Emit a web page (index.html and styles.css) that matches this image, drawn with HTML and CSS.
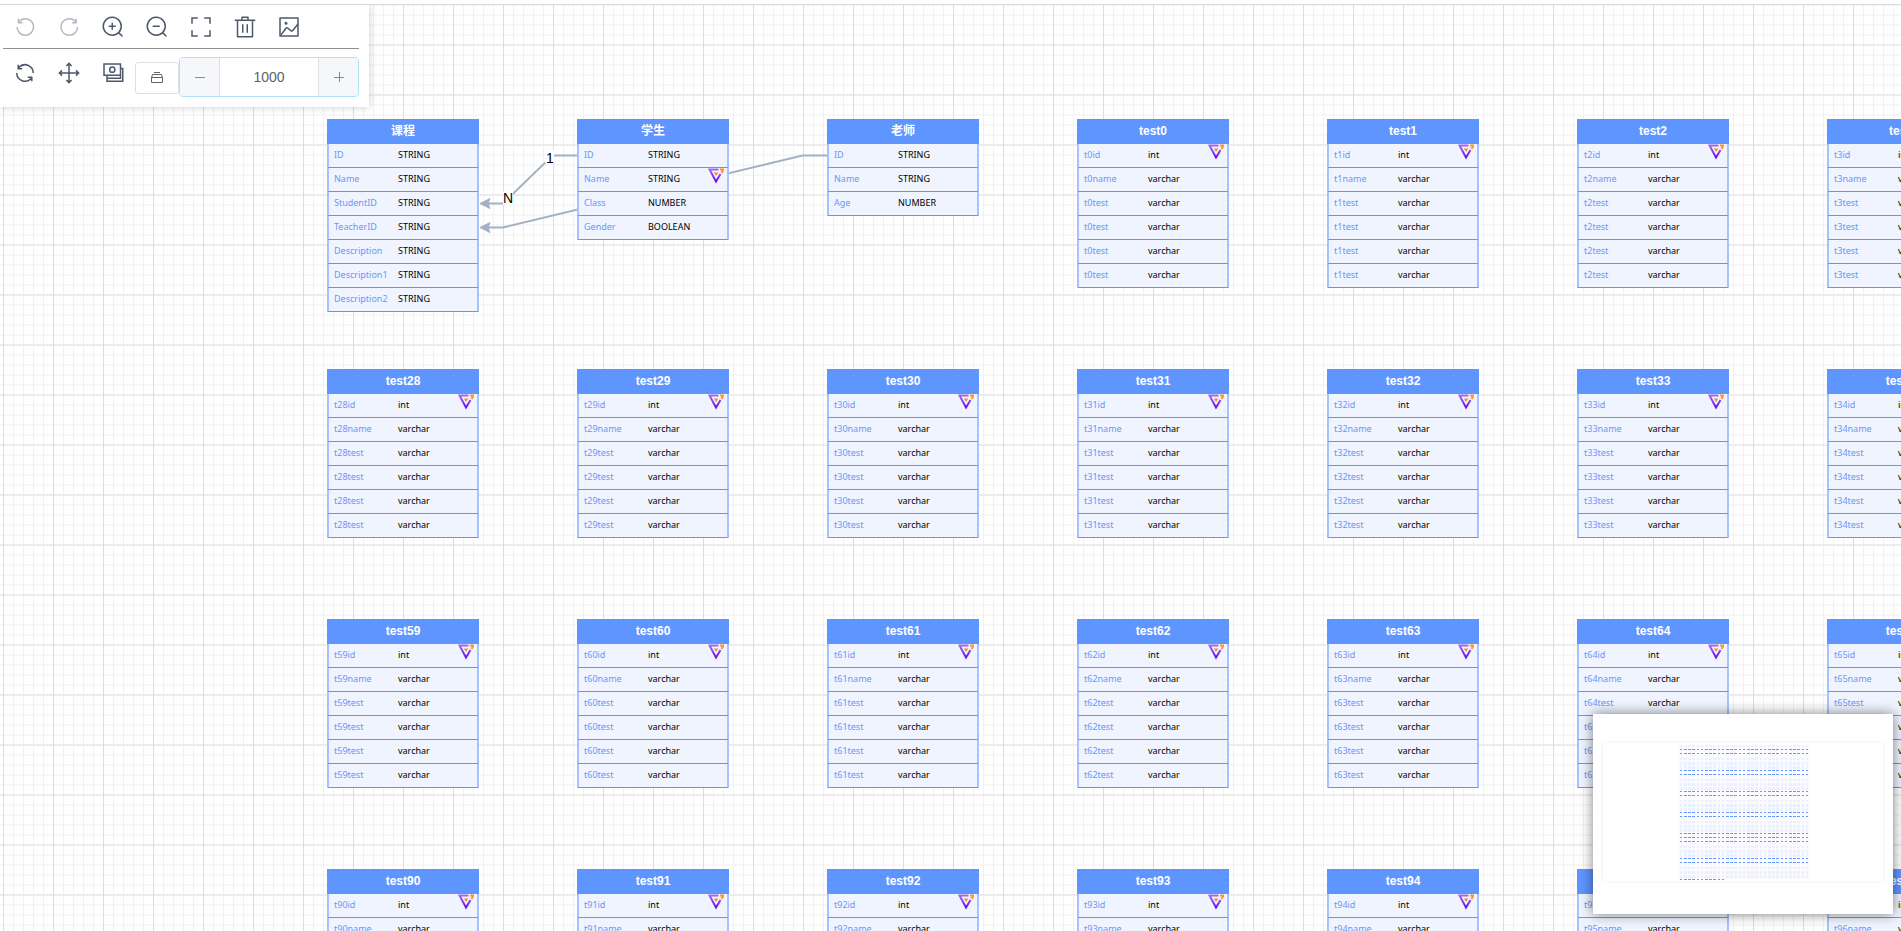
FILE: index.html
```
<!DOCTYPE html>
<html lang="zh-CN">
<head>
<meta charset="utf-8">
<title>ER</title>
<link rel="stylesheet" href="styles.css">
</head>
<body>
<main class="workspace">
  <div class="canvas" id="canvas">
    <svg class="edges" aria-hidden="true">
      <g class="edge-line">
        <path d="M577 155.500H552.500L503 203.500H486"/>
        <path d="M827 155.500H802.500L503 227.500H486"/>
      </g>
      <g class="edge-arrow">
        <path d="M480 203.500l10-5-2 5 2 5z"/>
        <path d="M480 227.500l10-5-2 5 2 5z"/>
      </g>
      <rect class="label-bg" x="545" y="150" width="9" height="13"/>
      <rect class="label-bg" x="503" y="192" width="10" height="13"/>
      <text class="edge-label" x="546" y="163">1</text>
      <text class="edge-label" x="503" y="203">N</text>
    </svg>
  </div>

  <div class="toolbar">
    <div class="tool-row">
      <button class="tool" aria-label="撤销" disabled><svg viewBox="0 0 1024 1024"><path d="M289.088 296.704h92.992a32 32 0 0 1 0 64H232.960a32 32 0 0 1-32-32V179.712a32 32 0 0 1 64 0v50.560a384 384 0 0 1 643.840 282.880 384 384 0 0 1-383.936 384 384 384 0 0 1-384-384h64a320 320 0 1 0 640 0 320 320 0 0 0-555.712-216.448z"/></svg></button>
      <button class="tool" aria-label="重做" disabled><svg viewBox="0 0 1024 1024"><path d="M784.512 230.272v-50.560a32 32 0 1 1 64 0v149.056a32 32 0 0 1-32 32H667.520a32 32 0 1 1 0-64h92.992A320 320 0 1 0 524.800 833.152a320 320 0 0 0 320-320h64a384 384 0 0 1-384 384 384 384 0 0 1-384-384 384 384 0 0 1 643.712-282.880z"/></svg></button>
      <button class="tool" aria-label="放大"><svg viewBox="0 0 1024 1024"><path d="m795.904 750.720 124.992 124.928a32 32 0 0 1-45.248 45.248L750.656 795.904a416 416 0 1 1 45.248-45.248zM480 832a352 352 0 1 0 0-704 352 352 0 0 0 0 704zm-32-384v-96a32 32 0 0 1 64 0v96h96a32 32 0 0 1 0 64h-96v96a32 32 0 0 1-64 0v-96h-96a32 32 0 0 1 0-64h96z"/></svg></button>
      <button class="tool" aria-label="缩小"><svg viewBox="0 0 1024 1024"><path d="m795.904 750.720 124.992 124.928a32 32 0 0 1-45.248 45.248L750.656 795.904a416 416 0 1 1 45.248-45.248zM480 832a352 352 0 1 0 0-704 352 352 0 0 0 0 704zM352 448h256a32 32 0 0 1 0 64H352a32 32 0 0 1 0-64z"/></svg></button>
      <button class="tool" aria-label="全屏"><svg viewBox="0 0 1024 1024"><path d="m160 96.064 192 .192a32 32 0 0 1 0 64l-192-.192V352a32 32 0 0 1-64 0V96h64v.064zm0 831.872V928H96V672a32 32 0 1 1 64 0v191.936l192-.192a32 32 0 1 1 0 64l-192 .192zM864 96.064V96h64v256a32 32 0 1 1-64 0V160.064l-192 .192a32 32 0 1 1 0-64l192-.192zm0 831.872-192-.192a32 32 0 0 1 0-64l192 .192V672a32 32 0 1 1 64 0v256h-64v-.064z"/></svg></button>
      <button class="tool" aria-label="删除"><svg viewBox="0 0 1024 1024"><path d="M160 256H96a32 32 0 0 1 0-64h256V95.936a32 32 0 0 1 32-32h256a32 32 0 0 1 32 32V192h256a32 32 0 1 1 0 64h-64v672a32 32 0 0 1-32 32H192a32 32 0 0 1-32-32V256zm448-64v-64H416v64h192zM224 896h576V256H224v640zm192-128a32 32 0 0 1-32-32V416a32 32 0 0 1 64 0v320a32 32 0 0 1-32 32zm192 0a32 32 0 0 1-32-32V416a32 32 0 0 1 64 0v320a32 32 0 0 1-32 32z"/></svg></button>
      <button class="tool" aria-label="导出图片"><svg viewBox="0 0 1024 1024"><path d="M160 160v704h704V160H160zm-32-64h768a32 32 0 0 1 32 32v768a32 32 0 0 1-32 32H128a32 32 0 0 1-32-32V128a32 32 0 0 1 32-32z"/><path d="M384 288q64 0 64 64t-64 64q-64 0-64-64t64-64zM185.408 876.992l-50.816-38.912L350.720 556.032a96 96 0 0 1 134.592-17.856l1.856 1.472 122.880 99.136a32 32 0 0 0 44.992-4.864l216-269.888 49.920 39.936-215.808 269.824-.256.320a96 96 0 0 1-135.040 14.464l-122.880-99.072-.640-.512a32 32 0 0 0-44.800 5.952L185.408 876.992z"/></svg></button>
    </div>
    <div class="tool-row tool-row-second">
      <button class="tool" aria-label="刷新"><svg viewBox="0 0 1024 1024"><path d="M771.776 794.880A384 384 0 0 1 128 512h64a320 320 0 0 0 555.712 216.448H654.720a32 32 0 1 1 0-64h149.056a32 32 0 0 1 32 32v148.928a32 32 0 1 1-64 0v-50.560zM276.288 295.616h92.992a32 32 0 0 1 0 64H220.160a32 32 0 0 1-32-32V178.560a32 32 0 0 1 64 0v50.560A384 384 0 0 1 896.128 512h-64a320 320 0 0 0-555.776-216.384z"/></svg></button>
      <button class="tool" aria-label="移动"><svg class="stroked" viewBox="0 0 1024 1024"><path d="M512 110v804M110 512h804M400 214l112-112 112 112M400 810l112 112 112-112M214 400L102 512l112 112M810 400l112 112-112 112"/></svg></button>
      <button class="tool" aria-label="复制"><svg class="stroked" viewBox="0 0 1024 1024"><path d="M128 128h704v480H128zM832 320h96v544H256V608M832 608v128H256"/><circle cx="480" cy="368" r="112"/></svg></button>
      <button class="plain-button" aria-label="布局"><svg viewBox="0 0 14 14"><path d="M4 1.500h6M2.500 3.500h9M1.500 6.500h11v5h-11zM2.500 3.500l-1 3M11.500 3.500l1 3"/></svg></button>
      <div class="stepper">
        <button class="step" aria-label="减少"><svg viewBox="0 0 12 12"><path d="M1 6.500h10"/></svg></button>
        <input class="step-value" type="text" value="1000" aria-label="数值">
        <button class="step" aria-label="增加"><svg viewBox="0 0 12 12"><path d="M1 6.500h10M6.500 1v10"/></svg></button>
      </div>
    </div>
  </div>

  <div class="minimap">
    <svg class="minimap-view" id="minimap" viewBox="0 0 280 138" aria-label="缩略图"></svg>
  </div>
</main>

<svg class="defs" aria-hidden="true">
  <defs>
    <linearGradient id="badge-purple" gradientUnits="userSpaceOnUse" x1="8" y1="0" x2="8" y2="15"><stop offset="0" stop-color="#a571f7"/><stop offset="1" stop-color="#6008f0"/></linearGradient>
    <symbol id="badge" viewBox="0 0 16 16">
      <path d="M10.500 1.500H1.500L8 13.500L12.500 6" fill="none" stroke="url(#badge-purple)" stroke-width="2"/>
      <path d="M12 1.500H15.500L13.500 5" fill="none" stroke="#ff9430" stroke-width="2"/>
      <path d="M5.800 4.500h4.500L8 8z" fill="#ff8c1a"/>
    </symbol>
  </defs>
</svg>
<script src="main.js"></script>
</body>
</html>
```

FILE: styles.css
```
* {
  box-sizing: border-box;
}

body {
  margin: 0;
  padding-top: 4px;
  height: 100vh;
  overflow: hidden;
  background: #fff;
  font-family: "Liberation Sans", "Noto Sans CJK SC", sans-serif;
}

button {
  margin: 0;
  padding: 0;
  border: 0;
  background: none;
  font: inherit;
  cursor: pointer;
}

.workspace {
  position: relative;
  height: 100%;
  border-top: 1px solid #d9d9d9;
  overflow: hidden;
}

.canvas {
  position: absolute;
  inset: 0;
  background-image:
    linear-gradient(to right, #dcdde0 1px, transparent 1px),
    linear-gradient(to bottom, #ececee 2px, transparent 2px),
    linear-gradient(to right, #f1f1f1 1px, transparent 1px),
    linear-gradient(to bottom, #f8f8f8 2px, transparent 2px);
  background-size: 50px 50px, 50px 50px, 10px 10px, 10px 10px;
  background-position: 3px -11px, 3px -11px, 3px -1px, 3px -1px;
}

.edges {
  position: absolute;
  top: -5px;
  left: 0;
  width: 100%;
  height: 100%;
}

.edge-line path {
  fill: none;
  stroke: #a2b1c3;
  stroke-width: 2;
}

.edge-arrow path {
  fill: #a2b1c3;
  stroke: #a2b1c3;
  stroke-linejoin: round;
}

.label-bg {
  fill: #fff;
}

.edge-label {
  font-size: 14px;
  fill: #000;
}

.entity {
  position: absolute;
  width: 152px;
  border-collapse: separate;
  border-spacing: 0;
  background: #eff4ff;
  table-layout: fixed;
}

.entity caption {
  height: 25px;
  line-height: 24px;
  background: #5f95ff;
  color: #fff;
  font-size: 12px;
  font-weight: bold;
  text-align: center;
}

.entity th,
.entity td {
  height: 24px;
  padding: 0 0 1px;
  border-bottom: 1px solid #5f95ff;
  font-family: "Noto Sans", sans-serif;
  font-size: 9px;
  line-height: 22px;
  font-weight: normal;
  text-align: left;
  white-space: nowrap;
}

.entity th {
  width: 71px;
  padding-left: 5px;
  border-left: 2px solid #a7c3ff;
  color: #6b96fa;
}

.entity td {
  border-right: 2px solid #a7c3ff;
  color: #000;
}

.badge {
  position: absolute;
  left: 131px;
  width: 16px;
  height: 16px;
}

.badge-row-1 {
  top: 25px;
}

.badge-row-2 {
  top: 49px;
}

.toolbar {
  position: absolute;
  top: 0;
  left: 0;
  padding: 0 10px 10px 3px;
  background: #fff;
  box-shadow: 0 0 8px rgba(0, 0, 0, 0.2);
}

.tool-row {
  display: flex;
  border-bottom: 1px solid #8f8f8f;
}

.tool-row-second {
  align-items: flex-start;
  padding-top: 2px;
  border-bottom: 0;
}

.tool {
  display: flex;
  align-items: center;
  justify-content: center;
  width: 44px;
  height: 43px;
  color: #4d596b;
}

.tool:disabled {
  color: #b4b8c0;
}

.tool svg {
  width: 24px;
  height: 24px;
  fill: currentColor;
}

.tool .stroked {
  fill: none;
  stroke: currentColor;
  stroke-width: 64;
}

.plain-button {
  display: flex;
  align-items: center;
  justify-content: center;
  width: 44px;
  height: 32px;
  margin-top: 11px;
  border: 1px solid #dcdfe6;
  border-radius: 3px;
}

.plain-button svg {
  width: 14px;
  height: 14px;
  fill: none;
  stroke: #606266;
}

.stepper {
  display: flex;
  width: 180px;
  height: 40px;
  margin-top: 6px;
  border: 1px solid #b3e0fb;
  border-radius: 4px;
  overflow: hidden;
}

.step {
  display: flex;
  align-items: center;
  justify-content: center;
  width: 39px;
  background: #f5f7fa;
}

.step svg {
  width: 12px;
  height: 12px;
  fill: none;
  stroke: #858990;
}

.step-value {
  flex: 1;
  min-width: 0;
  padding: 0;
  border: 0;
  border-left: 1px solid #dcdfe6;
  border-right: 1px solid #dcdfe6;
  background: #fff;
  color: #606266;
  font: 14px "Liberation Sans", sans-serif;
  text-align: center;
}

.minimap {
  position: absolute;
  right: 8px;
  bottom: 17px;
  width: 300px;
  height: 200px;
  padding: 29px 10px;
  background: #fff;
  box-shadow: 0 0 12px rgba(0, 0, 0, 0.5);
}

.minimap-view {
  display: block;
  width: 280px;
  height: 138px;
  box-shadow: 0 0 4px rgba(0, 0, 0, 0.08);
}

.mini-wash {
  fill: #fbfaff;
}

.mini-body {
  fill: #eaf0ff;
}

.mini-head {
  fill: #6699ff;
}

.defs {
  position: absolute;
  width: 0;
  height: 0;
}
```

FILE: main.js
```
const PITCH = 250;
const ORIGIN = { x: 327, y: 114 };
const canvas = document.getElementById('canvas');

function numbered(n) {
  const t = 't' + n;
  return {
    name: 'test' + n,
    badgeRow: 1,
    fields: [[t + 'id', 'int'], [t + 'name', 'varchar'], [t + 'test', 'varchar'],
      [t + 'test', 'varchar'], [t + 'test', 'varchar'], [t + 'test', 'varchar']]
  };
}

const range = (start, count) => Array.from({ length: count }, (_, i) => numbered(start + i));

const rows = [
  [
    { name: '课程', fields: [['ID', 'STRING'], ['Name', 'STRING'], ['StudentID', 'STRING'],
      ['TeacherID', 'STRING'], ['Description', 'STRING'], ['Description1', 'STRING'],
      ['Description2', 'STRING']] },
    { name: '学生', badgeRow: 2, fields: [['ID', 'STRING'], ['Name', 'STRING'],
      ['Class', 'NUMBER'], ['Gender', 'BOOLEAN']] },
    { name: '老师', fields: [['ID', 'STRING'], ['Name', 'STRING'], ['Age', 'NUMBER']] },
    ...range(0, 4)
  ],
  range(28, 7),
  range(59, 7),
  range(90, 7)
];

rows.forEach((row, j) => row.forEach((entity, i) => {
  const table = document.createElement('table');
  table.className = 'entity';
  table.style.left = ORIGIN.x + i * PITCH + 'px';
  table.style.top = ORIGIN.y + j * PITCH + 'px';
  const badge = entity.badgeRow
    ? `<svg class="badge badge-row-${entity.badgeRow}"><use href="#badge"/></svg>` : '';
  table.innerHTML = `<caption>${entity.name}${badge}</caption><tbody>` +
    entity.fields.map(([k, v]) => `<tr><th scope="row">${k}</th><td>${v}</td></tr>`).join('') +
    '</tbody>';
  canvas.appendChild(table);
}));

/* Minimap: 31 columns of tables, heads as thin bars and bodies as pale blocks. */
const slots = [[0, 2], [4, 3], [8, 3], [12, 3], [17, 2]];
const left = 77;
let shapes = `<rect class="mini-wash" x="${left - 1}" y="2" width="130" height="134"/>`;
function band(y, height, cls, count) {
  for (let c = 0; c < count; c++) {
    const [x, w] = slots[c % 5];
    shapes += `<rect class="${cls}" x="${left + x + 21 * Math.floor(c / 5)}" y="${y}" width="${w}" height="${height}"/>`;
  }
}
const groups = [[6, 10], [27, 31], [48, 52], [69, 73], [90, 94, 98], [115, 119]];
band(2, 2, 'mini-body', 31);
groups.forEach(heads => {
  const last = heads[heads.length - 1];
  heads.forEach(y => band(y, 1, 'mini-head', 31));
  band(last + 5, 2, 'mini-body', 31);
  band(last + 9, 3, 'mini-body', 31);
  band(last + 13, 3, 'mini-body', 31);
});
band(136, 1, 'mini-head', 11);
document.getElementById('minimap').innerHTML = shapes;
```
